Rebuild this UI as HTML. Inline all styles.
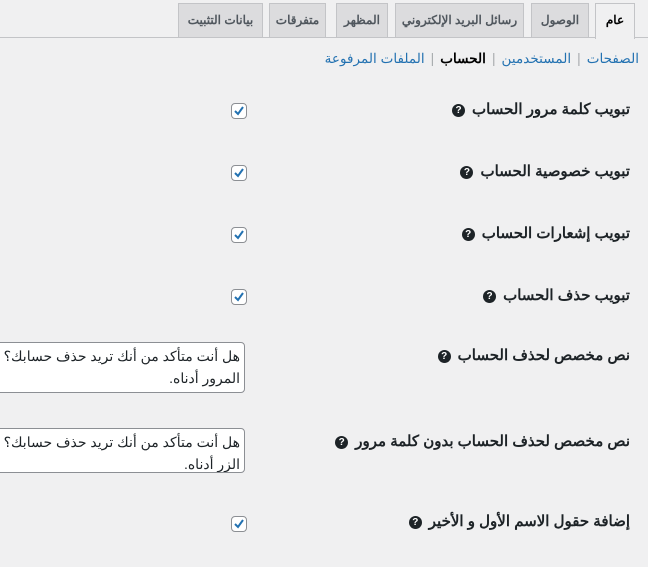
<!DOCTYPE html><html><head><meta charset="utf-8"><style>
body{margin:0;width:648px;height:567px;background:#f0f0f1;position:relative;overflow:hidden;font-family:"Liberation Sans","Noto Sans CJK SC",sans-serif;color:#1d2327;direction:rtl}
.line{position:absolute;left:0;right:0;top:37px;height:1px;background:#c3c4c7}
.tab{position:absolute;top:3px;height:33px;border:1px solid #c3c4c7;border-bottom:none;background:#dcdcde;font-size:12px;font-weight:bold;color:#50575e;text-align:center;line-height:32px;box-sizing:content-box}
.tab.a{background:#f0f0f1;color:#000;height:35px;z-index:2}
.sub{position:absolute;top:51px;right:9px;font-size:13.6px;color:#2271b1;white-space:nowrap}
.sub b{color:#000}.sub span{color:#a7aaad;margin:0 6px}
.lab{position:absolute;right:18px;font-size:15px;font-weight:bold;white-space:nowrap}
.q{display:inline-block;width:13px;height:13px;border-radius:50%;background:#1d2327;color:#fff;font-size:10px;line-height:13px;text-align:center;vertical-align:middle;margin-right:7px}
.cb{position:absolute;left:231px;width:14px;height:14px;border:1px solid #8c8f94;border-radius:4px;background:#fff}
.cb svg{position:absolute;left:1px;top:1px}
.ta{position:absolute;left:-10px;width:255px;border:1px solid #8c8f94;border-radius:4px;background:#fff;font-size:14px;line-height:22px;padding:2px 4px;box-sizing:border-box;white-space:nowrap;overflow:hidden}
</style></head><body>
<div class="line"></div>
<div class="tab a" style="left:595px;width:38px">عام</div>
<div class="tab" style="left:531px;width:56px">الوصول</div>
<div class="tab" style="left:395px;width:127px">رسائل البريد الإلكتروني</div>
<div class="tab" style="left:336px;width:50px">المظهر</div>
<div class="tab" style="left:269px;width:55px">متفرقات</div>
<div class="tab" style="left:178px;width:83px">بيانات التثبيت</div>
<div class="sub">الصفحات<span>|</span>المستخدمين<span>|</span><b>الحساب</b><span>|</span>الملفات المرفوعة</div>
<div class="lab" style="top:100px">تبويب كلمة مرور الحساب<span class="q">?</span></div>
<div class="lab" style="top:162px">تبويب خصوصية الحساب<span class="q">?</span></div>
<div class="lab" style="top:224px">تبويب إشعارات الحساب<span class="q">?</span></div>
<div class="lab" style="top:286px">تبويب حذف الحساب<span class="q">?</span></div>
<div class="lab" style="top:346px">نص مخصص لحذف الحساب<span class="q">?</span></div>
<div class="lab" style="top:432px">نص مخصص لحذف الحساب بدون كلمة مرور<span class="q">?</span></div>
<div class="lab" style="top:512px">إضافة حقول الاسم الأول و الأخير<span class="q">?</span></div>
<div class="cb" style="top:103px"><svg width="12" height="12" viewBox="0 0 12 12"><path d="M2 6l3 3 5-7" stroke="#2271b1" stroke-width="2" fill="none"/></svg></div>
<div class="cb" style="top:165px"><svg width="12" height="12" viewBox="0 0 12 12"><path d="M2 6l3 3 5-7" stroke="#2271b1" stroke-width="2" fill="none"/></svg></div>
<div class="cb" style="top:227px"><svg width="12" height="12" viewBox="0 0 12 12"><path d="M2 6l3 3 5-7" stroke="#2271b1" stroke-width="2" fill="none"/></svg></div>
<div class="cb" style="top:289px"><svg width="12" height="12" viewBox="0 0 12 12"><path d="M2 6l3 3 5-7" stroke="#2271b1" stroke-width="2" fill="none"/></svg></div>
<div class="cb" style="top:516px"><svg width="12" height="12" viewBox="0 0 12 12"><path d="M2 6l3 3 5-7" stroke="#2271b1" stroke-width="2" fill="none"/></svg></div>
<div class="ta" style="top:342px;height:51px">هل أنت متأكد من أنك تريد حذف حسابك؟<br>المرور أدناه.</div>
<div class="ta" style="top:428px;height:45px">هل أنت متأكد من أنك تريد حذف حسابك؟<br>الزر أدناه.</div>
</body></html>
